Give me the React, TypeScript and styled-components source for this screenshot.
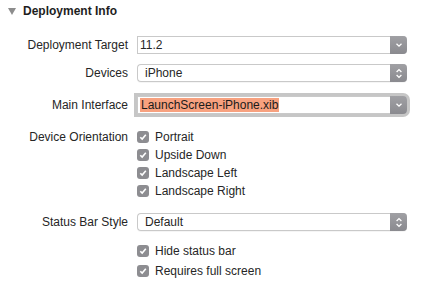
import React from "react";
import styled, { createGlobalStyle } from "styled-components";

const GlobalStyle = createGlobalStyle`
  html, body {
    margin: 0;
    padding: 0;
    background: #ffffff;
  }
  body {
    font-family: "Liberation Sans", Arial, sans-serif;
    font-size: 12px;
    color: #262626;
  }
`;

const Panel = styled.div`
  width: 421px;
  height: 283px;
  background: #ffffff;
  overflow: hidden;
`;

const Header = styled.div`
  display: flex;
  align-items: center;
  gap: 7px;
  height: 22px;
  padding-left: 8px;
  font-weight: 700;
  color: #1e1e1e;
`;

const Disclosure = styled.span`
  width: 0;
  height: 0;
  border-left: 4px solid transparent;
  border-right: 4px solid transparent;
  border-top: 7px solid #8c8c8c;
`;

const Form = styled.div`
  display: grid;
  grid-template-columns: 128px 270px;
  column-gap: 9px;
  padding-top: 14px;
`;

const Label = styled.div<{ $top?: number }>`
  text-align: right;
  margin-top: ${({ $top }) => $top ?? 0}px;
  line-height: 18px;
  white-space: nowrap;
`;

const Cell = styled.div<{ $top?: number }>`
  margin-top: ${({ $top }) => $top ?? 0}px;
  display: flex;
  flex-direction: column;
`;

const Combo = styled.div<{ $focused?: boolean }>`
  display: flex;
  height: 18px;
  box-sizing: border-box;
  border: 1px solid #c9c9c9;
  border-right: none;
  background: #fff;
  box-shadow: ${({ $focused }) => ($focused ? "0 0 0 3px #c6c6c6" : "none")};
  border-radius: 0 4px 4px 0;
`;

const ComboText = styled.div`
  flex: 1;
  padding-left: 2px;
  line-height: 16px;
  white-space: nowrap;
`;

const Selected = styled.span`
  background: #f7a17f;
  color: #1a1a1a;
  padding: 0 1px;
`;

const ArrowButton = styled.div`
  width: 17px;
  margin: -1px 0;
  border-radius: 0 4px 4px 0;
  background: linear-gradient(#a0a0a4, #8a8a8f);
  display: flex;
  align-items: center;
  justify-content: center;
`;

const Popup = styled.div`
  display: flex;
  height: 18px;
  box-sizing: border-box;
  border: 1px solid #c9c9c9;
  border-right: none;
  border-radius: 4px;
  background: #fff;
  box-shadow: 0 1px 0 rgba(0, 0, 0, 0.04);
`;

const PopupText = styled.div`
  flex: 1;
  padding-left: 7px;
  line-height: 16px;
`;

const CheckRow = styled.div<{ $top?: number }>`
  display: flex;
  align-items: center;
  gap: 6px;
  height: 18px;
  margin-top: ${({ $top }) => $top ?? 0}px;
`;

const Box = styled.span`
  width: 12px;
  height: 12px;
  border-radius: 3px;
  background: #8d8d91;
  display: flex;
  align-items: center;
  justify-content: center;
`;

const ChevronDown = () => (
  <svg width="8" height="6" viewBox="0 0 8 6">
    <path d="M1.5 1.8 L4 4.2 L6.5 1.8" fill="none" stroke="#fff" strokeWidth="1.3" />
  </svg>
);

const UpDown = () => (
  <svg width="8" height="11" viewBox="0 0 8 11">
    <path d="M1.6 4 L4 1.6 L6.4 4 M1.6 7 L4 9.4 L6.4 7" fill="none" stroke="#fff" strokeWidth="1.3" />
  </svg>
);

const Tick = () => (
  <svg width="10" height="10" viewBox="0 0 10 10">
    <path d="M2.3 5.2 L4.2 7.1 L7.8 2.8" fill="none" stroke="#fff" strokeWidth="1.6" />
  </svg>
);

const Check = ({ label, top }: { label: string; top?: number }) => (
  <CheckRow $top={top}>
    <Box>
      <Tick />
    </Box>
    <span>{label}</span>
  </CheckRow>
);

export default function App() {
  return (
    <Panel>
      <GlobalStyle />
      <Header>
        <Disclosure />
        Deployment Info
      </Header>
      <Form>
        <Label>Deployment Target</Label>
        <Cell>
          <Combo>
            <ComboText>11.2</ComboText>
            <ArrowButton>
              <ChevronDown />
            </ArrowButton>
          </Combo>
        </Cell>

        <Label $top={10}>Devices</Label>
        <Cell $top={10}>
          <Popup>
            <PopupText>iPhone</PopupText>
            <ArrowButton>
              <UpDown />
            </ArrowButton>
          </Popup>
        </Cell>

        <Label $top={14}>Main Interface</Label>
        <Cell $top={14}>
          <Combo $focused>
            <ComboText>
              <Selected>LaunchScreen-iPhone.xib</Selected>
            </ComboText>
            <ArrowButton>
              <ChevronDown />
            </ArrowButton>
          </Combo>
        </Cell>

        <Label $top={14}>Device Orientation</Label>
        <Cell $top={14}>
          <Check label="Portrait" />
          <Check label="Upside Down" />
          <Check label="Landscape Left" />
          <Check label="Landscape Right" />
        </Cell>

        <Label $top={13}>Status Bar Style</Label>
        <Cell $top={13}>
          <Popup>
            <PopupText>Default</PopupText>
            <ArrowButton>
              <UpDown />
            </ArrowButton>
          </Popup>
        </Cell>

        <div />
        <Cell $top={11}>
          <Check label="Hide status bar" />
          <Check label="Requires full screen" top={2} />
        </Cell>
      </Form>
    </Panel>
  );
}
